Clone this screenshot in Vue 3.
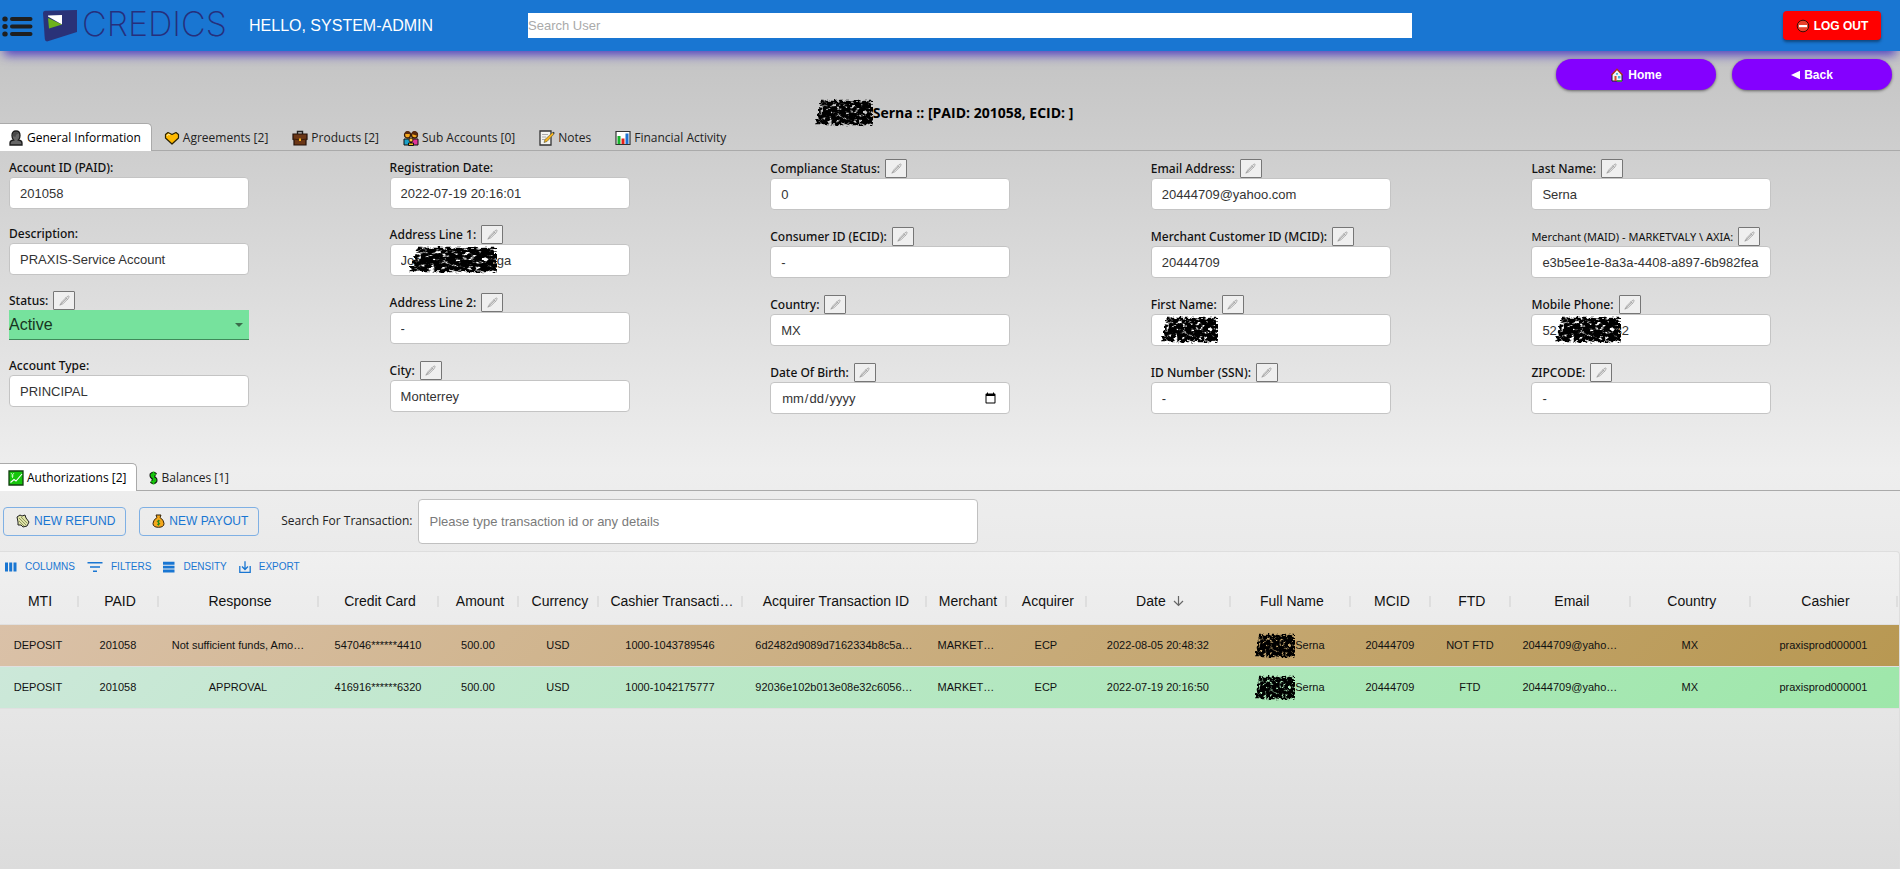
<script setup>
import { ref } from 'vue'

const accountTabs = [
  { icon: 'person', text: 'General Information' },
  { icon: 'heart', text: 'Agreements [2]' },
  { icon: 'case', text: 'Products [2]' },
  { icon: 'people', text: 'Sub Accounts [0]' },
  { icon: 'memo', text: 'Notes' },
  { icon: 'bars', text: 'Financial Activity' }
]
const accountTab = ref(0)

const moneyTabs = [
  { icon: 'trend', text: 'Authorizations [2]' },
  { icon: 'dollar', text: 'Balances [1]' }
]
const moneyTab = ref(0)

const gap = n => '\u00a0'.repeat(n)
const columns = [
  [
    { label: 'Account ID (PAID):', value: '201058' },
    { label: 'Description:', value: 'PRAXIS-Service Account' },
    { label: 'Status:', value: 'Active', edit: true, kind: 'select' },
    { label: 'Account Type:', value: 'PRINCIPAL' }
  ],
  [
    { label: 'Registration Date:', value: '2022-07-19 20:16:01' },
    { label: 'Address Line 1:', value: 'Jos' + gap(19) + 'aga', edit: true, mask: 'address' },
    { label: 'Address Line 2:', value: '-', edit: true },
    { label: 'City:', value: 'Monterrey', edit: true }
  ],
  [
    { label: 'Compliance Status:', value: '0', edit: true },
    { label: 'Consumer ID (ECID):', value: '-', edit: true },
    { label: 'Country:', value: 'MX', edit: true },
    { label: 'Date Of Birth:', value: '', edit: true, kind: 'date' }
  ],
  [
    { label: 'Email Address:', value: '20444709@yahoo.com', edit: true },
    { label: 'Merchant Customer ID (MCID):', value: '20444709', edit: true },
    { label: 'First Name:', value: '', edit: true, mask: 'first' },
    { label: 'ID Number (SSN):', value: '-', edit: true }
  ],
  [
    { label: 'Last Name:', value: 'Serna', edit: true },
    { label: 'Merchant (MAID) - MARKETVALY \\ AXIA:', value: 'e3b5ee1e-8a3a-4408-a897-6b982fea', edit: true, small: true },
    { label: 'Mobile Phone:', value: '52' + gap(16) + '32', edit: true, mask: 'phone' },
    { label: 'ZIPCODE:', value: '-', edit: true }
  ]
]

const heads = [
  ['MTI', 80], ['PAID', 80], ['Response', 160], ['Credit Card', 120], ['Amount', 80],
  ['Currency', 80], ['Cashier Transacti…', 144], ['Acquirer Transaction ID', 184],
  ['Merchant', 80], ['Acquirer', 80], ['Date', 144], ['Full Name', 120], ['MCID', 80],
  ['FTD', 80], ['Email', 120], ['Country', 120], ['Cashier', 147]
]
const rows = [
  ['DEPOSIT', '201058', 'Not sufficient funds, Amo…', '547046******4410', '500.00', 'USD', '1000-1043789546', '6d2482d9089d7162334b8c5a…', 'MARKET…', 'ECP', '2022-08-05 20:48:32', 'Serna', '20444709', 'NOT FTD', '20444709@yaho…', 'MX', 'praxisprod000001'],
  ['DEPOSIT', '201058', 'APPROVAL', '416916******6320', '500.00', 'USD', '1000-1042175777', '92036e102b013e08e32c6056…', 'MARKET…', 'ECP', '2022-07-19 20:16:50', 'Serna', '20444709', 'FTD', '20444709@yaho…', 'MX', 'praxisprod000001']
]
</script>

<template>
  <div class="page">
    <svg class="defs" aria-hidden="true">
      <defs>
        <filter id="scrawl" x="-10%" y="-10%" width="120%" height="120%">
          <feTurbulence type="fractalNoise" baseFrequency="0.22 0.3" numOctaves="3" seed="4" result="n" />
          <feDisplacementMap in="SourceGraphic" in2="n" scale="8" xChannelSelector="R" yChannelSelector="G" result="d" />
          <feColorMatrix in="n" type="matrix" values="0 0 0 0 0  0 0 0 0 0  0 0 0 0 0  4 3 0 0 -2.4" result="a" />
          <feComposite in="d" in2="a" operator="in" result="c" />
          <feGaussianBlur in="c" stdDeviation="0.4" />
        </filter>
        <symbol id="scrib" viewBox="0 0 60 30" preserveAspectRatio="none">
          <path d="M6 2 60 2 60 28 0 28Z" filter="url(#scrawl)" />
          <path d="M8 6 58 7 56 22 5 23Z" filter="url(#scrawl)" />
        </symbol>
        <symbol id="pen" viewBox="0 0 14 14">
          <path d="M2 12 4 8.500 9.500 3 11.500 2 12 3 11 5 5.500 10.500Z" fill="#e2e2e2" stroke="#999" stroke-width=".7" />
          <path d="M8 4 10.500 6M2 12 9.500 4.500" fill="none" stroke="#999" stroke-width=".7" />
        </symbol>
        <symbol id="person" viewBox="0 0 16 16">
          <path d="M2 15v-2q0-2.500 3.500-3-1.500-1.500-1.500-4.500Q4 1 8 1t4 4.500q0 3-1.500 4.500 3.500.5 3.500 3v2Z" fill="#666" stroke="#1c1c1c" stroke-width="1.300" />
          <path d="M4.500 6Q4.500 2 8 2q2 0 2.500 1.500-3 .5-3 3.500Z" fill="#484848" />
        </symbol>
        <symbol id="heart" viewBox="0 0 16 16">
          <path d="M8 14 1.500 8V4.500L4 2.500l4 2 4-2 2.500 2V8Z" fill="#ffb900" stroke="#2b2200" stroke-width="1.200" stroke-linejoin="round" />
          <path d="M3 6Q4 3.500 6 5" fill="none" stroke="#ffe68c" stroke-width="1.300" />
        </symbol>
        <symbol id="case" viewBox="0 0 16 16">
          <path d="M5.500 4V1.500h5V4" fill="none" stroke="#222" stroke-width="1.400" />
          <path d="M1 4h14v5.500l-1 .5v5H2v-5l-1-.5Z" fill="#6b3717" stroke="#24120a" stroke-width="1.200" />
          <path d="M1.500 9 8 10l6.500-1" fill="none" stroke="#3b1c0b" />
          <path d="M7 8.500h2v2.500H7Z" fill="#f6b21b" />
        </symbol>
        <symbol id="people" viewBox="0 0 16 16">
          <path d="M1 15V9h6.500v6Z" fill="#1ba1c8" stroke="#111" />
          <path d="M8.500 15V9H15v6Z" fill="#e2339a" stroke="#111" />
          <circle cx="4.500" cy="5" r="3" fill="#f6a81c" stroke="#3a1d0a" stroke-width="1.300" />
          <circle cx="11.500" cy="5" r="3" fill="#f6a81c" stroke="#3a1d0a" stroke-width="1.300" />
          <path d="M1.500 4Q2 1 4.500 1t3 3ZM8.500 4Q9 1 11.500 1t3.500 5Z" fill="#5a2a0e" />
          <circle cx="8" cy="10" r="2" fill="#ffc83d" stroke="#3a1d0a" />
          <path d="M5.500 15.500V13h5v2.500Z" fill="#f7b91a" stroke="#111" />
        </symbol>
        <symbol id="memo" viewBox="0 0 16 16">
          <path d="M1 1h11v14H1Z" fill="#f4f4f0" stroke="#333" stroke-width="1.300" />
          <path d="M3 4.500h6M3 7h4M3 9.500h3" stroke="#aaa" />
          <path d="M5 12.500 6 9.500 13.500 2.500 15 4 8 11.500Z" fill="#f8b21a" stroke="#664" stroke-width=".7" />
          <path d="M13.500 2.500 15 4l.7-1-1-1.200Z" fill="#333" />
        </symbol>
        <symbol id="bars" viewBox="0 0 16 16">
          <path d="M1 1.500h14v13H1Z" fill="#fff" stroke="#333" stroke-width="1.200" />
          <path d="M2.500 6h3v8h-3Z" fill="#17b32b" />
          <path d="M6.500 8.500h3V14h-3Z" fill="#e3221c" />
          <path d="M10.500 3.500h3V14h-3Z" fill="#1e72d2" />
        </symbol>
        <symbol id="trend" viewBox="0 0 16 16">
          <path d="M1 1h14v14H1Z" fill="#16c60c" stroke="#123d10" stroke-width="1.300" />
          <path d="M2.500 12.500 6 9.500 8 11 14 4" fill="none" stroke="#fff" stroke-width="1.100" />
          <path d="M3 3 4.500 5 6 3M4.500 5v3M3.300 6h2.400" fill="none" stroke="#d8ffd4" stroke-width=".8" />
        </symbol>
        <symbol id="dollar" viewBox="0 0 9 16">
          <path d="M7 4.800Q4 3 2.500 4.500 2 6.800 4.500 7.800T6.500 11Q5 13 2 11.200M4.500 2v12" fill="none" stroke="#111" stroke-width="3.800" />
          <path d="M7 4.800Q4 3 2.500 4.500 2 6.800 4.500 7.800T6.500 11Q5 13 2 11.200M4.500 1.500v13" fill="none" stroke="#16c60c" stroke-width="1.800" />
        </symbol>
      </defs>
    </svg>

    <header class="bar">
      <button class="menu" aria-label="Menu">
        <svg width="32" height="22" viewBox="0 0 32 22" stroke="#1f1f1f" stroke-width="4" stroke-linecap="round">
          <path d="M10 4H28.500M10 11.500H28.500M10 19H28.500" />
          <path d="M2.800 4h.4M2.800 11.500h.4M2.800 19h.4" stroke-width="5" />
        </svg>
      </button>
      <svg class="mark" width="34" height="32" viewBox="0 0 34 32">
        <path d="M2 .8 34 0V22L4 31.500Q2 31 1.800 29L0 3Q0 1 2 .8Z" fill="#2a3278" />
        <path d="M5 5.500 19 5V14.500L5 6.500Z" fill="#fff" />
        <path d="M5 8 19 14.500 6 18.500Z" fill="#6db31b" />
      </svg>
      <span class="brand">CREDICS</span>
      <span class="hello">HELLO, SYSTEM-ADMIN</span>
      <input class="user-search" type="text" placeholder="Search User" aria-label="Search User">
      <button class="logout">
        <svg width="14" height="14" viewBox="0 0 14 14">
          <circle cx="7" cy="7" r="5.800" fill="#e8412a" stroke="#3b0d06" />
          <path d="M3 6h8v2.200H3Z" fill="#fff" />
        </svg>
        LOG OUT
      </button>
    </header>

    <nav class="quick">
      <button class="pill">
        <svg width="14" height="14" viewBox="0 0 14 14">
          <path d="M2 13V6.500L7 1l5 5.500V13Z" fill="#eef4f6" stroke="#222" />
          <path d="M1.500 7 7 1.200 12.500 7" fill="none" stroke="#b3311f" stroke-width="1.300" />
          <path d="M4.500 8h2v5h-2Z" fill="#d8482c" />
          <path d="M8 8h2.500v2.500H8ZM6 5h2v1.800H6Z" fill="#4ab7dc" />
          <path d="M7 13h5" stroke="#37a33a" stroke-width="1.500" />
        </svg>
        Home
      </button>
      <button class="pill">
        <svg width="9" height="10" viewBox="0 0 9 10"><path d="M0 5 9 .8V9.200Z" fill="#fff" /></svg>
        Back
      </button>
    </nav>

    <h1 class="title">
      <svg class="scrib title-scrib" aria-hidden="true"><use href="#scrib" /></svg>Serna :: [PAID: 201058, ECID: ]
    </h1>

    <div class="tabs" role="tablist">
      <button v-for="(t, i) in accountTabs" :key="t.text" role="tab" :aria-selected="i === accountTab" class="tab" :class="{ on: i === accountTab }" @click="accountTab = i">
        <svg class="emoji"><use :href="'#' + t.icon" /></svg>{{ t.text }}
      </button>
    </div>

    <section class="fields">
      <div v-for="(col, c) in columns" :key="c" class="col">
        <div v-for="(f, r) in col" :key="f.label" class="field" :class="{ editable: f.edit }">
          <div class="head">
            <label :for="'f' + c + r" :class="{ small: f.small }">{{ f.label }}</label>
            <button v-if="f.edit" class="edit" :aria-label="'Edit ' + f.label">
              <svg width="13" height="13"><use href="#pen" /></svg>
            </button>
          </div>
          <div class="box">
            <template v-if="f.kind === 'select'">
              <select :id="'f' + c + r" class="status"><option>{{ f.value }}</option></select>
              <svg class="caret" width="8" height="4" viewBox="0 0 8 4"><path d="M0 0h8L4 4Z" fill="#3b6b4b" /></svg>
            </template>
            <input v-else :id="'f' + c + r" class="text" :type="f.kind || 'text'" :value="f.value">
            <svg v-if="f.mask" class="scrib" :class="f.mask" aria-hidden="true"><use href="#scrib" /></svg>
          </div>
        </div>
      </div>
    </section>

    <div class="tabs" role="tablist">
      <button v-for="(t, i) in moneyTabs" :key="t.text" role="tab" :aria-selected="i === moneyTab" class="tab" :class="{ on: i === moneyTab }" @click="moneyTab = i">
        <svg class="emoji" :class="t.icon"><use :href="'#' + t.icon" /></svg>{{ t.text }}
      </button>
    </div>

    <section class="actions">
      <button class="outline">
        <svg width="14" height="14" viewBox="0 0 14 14">
          <path d="M1 3 4 1l2 1 3-1 1 3 3 4-2 4-4 1-2-2-3 0 0-3Z" fill="#dfe3a6" stroke="#222" />
          <path d="M3 4 10 11M5 3l6 6M3 7l5 5" stroke="#77804e" stroke-width=".8" />
        </svg>
        NEW REFUND
      </button>
      <button class="outline">
        <svg width="13" height="14" viewBox="0 0 13 14">
          <path d="M4 1h5L8 3.500Q12 6 12 9.500 12 13.300 6.500 13.300T1 9.500Q1 6 5 3.500Z" fill="#f5a81c" stroke="#33230a" />
          <path d="M8.200 7Q6.500 6 5.200 7.200q0 1 1.300 1.300T7.800 10Q6.500 11.200 5 10.200M6.500 5.800v5.800" fill="none" stroke="#178a1c" stroke-width=".9" />
        </svg>
        NEW PAYOUT
      </button>
      <label class="find" for="txn">Search For Transaction:</label>
      <input id="txn" class="txn" type="text" placeholder="Please type transaction id or any details">
    </section>

    <section class="grid">
      <div class="tools">
        <button>
          <svg width="12" height="12" viewBox="0 0 12 12" fill="#1976d2"><path d="M0 1.500h3v9H0zM4.200 1.500h3v9h-3zM8.500 1.500h3v9h-3z" /></svg>
          COLUMNS
        </button>
        <button>
          <svg width="16" height="12" viewBox="0 0 16 12" fill="#1976d2"><path d="M.5 1h15v1.600H.5zM3 5.200h10v1.600H3zM6 9.400h4V11H6z" /></svg>
          FILTERS
        </button>
        <button>
          <svg width="12" height="12" viewBox="0 0 12 12" fill="#1976d2"><path d="M0 .8h11.500v3H0zM0 4.800h11.500v2.800H0zM0 8.600h11.500v2.800H0z" /></svg>
          DENSITY
        </button>
        <button>
          <svg width="12" height="12" viewBox="0 0 12 12" fill="none" stroke="#1976d2" stroke-width="1.300"><path d="M.8 5v6.300h10.400V5M6 .3v8M3 5.500 6 8.500 9 5.500" /></svg>
          EXPORT
        </button>
      </div>
      <table>
        <colgroup><col v-for="h in heads" :key="h[0]" :style="{ width: h[1] / 18.99 + '%' }"></colgroup>
        <thead>
          <tr>
            <th v-for="h in heads" :key="h[0]" scope="col">
              {{ h[0] }}<svg v-if="h[0] === 'Date'" class="arrow" width="11" height="12" viewBox="0 0 11 12" fill="none" stroke="#666" stroke-width="1.200"><path d="M5.500 1v9.500M1 6l4.500 4.500L10 6" /></svg>
            </th>
          </tr>
        </thead>
        <tbody>
          <tr v-for="(row, i) in rows" :key="i" :class="i ? 'ok' : 'fail'">
            <td v-for="(cell, j) in row" :key="j">
              <svg v-if="j === 11" class="scrib cell-scrib" aria-hidden="true"><use href="#scrib" /></svg>{{ cell }}
            </td>
          </tr>
        </tbody>
      </table>
    </section>
  </div>
</template>

<style>
body {
  margin: 0;
}
</style>

<style scoped>
.page {
  min-height: 100vh;
  box-sizing: border-box;
  display: flex;
  flex-direction: column;
  background: linear-gradient(#bfbfbf, #eee 54%, #eaeaea 64%, #ddd);
  color: #111;
  font-family: "Liberation Sans", Arial, sans-serif;
  overflow-x: clip;
}
.page * {
  box-sizing: border-box;
}
.defs {
  position: absolute;
  width: 0;
  height: 0;
}
button {
  font-family: inherit;
  cursor: pointer;
}
button svg {
  flex: none;
}
.bar {
  height: 51px;
  display: flex;
  align-items: center;
  background: #1976d2;
  box-shadow: 0 8px 10px -4px rgba(60, 40, 190, 0.85);
}
.menu {
  border: 0;
  padding: 0 0 0 2px;
  background: none;
  display: flex;
  width: 43px;
}
.mark {
  flex: none;
}
.brand {
  width: 172px;
  padding-left: 5px;
  margin-top: -4px;
  font: 200 34px/40px Inter, sans-serif;
  color: #262f7c;
}
.hello {
  width: 279px;
  font-size: 16px;
  line-height: 20px;
  color: #fff;
}
.user-search {
  width: 46.500%;
  height: 25px;
  border: 0;
  padding: 0;
  background: #fff;
  font: 13px "Liberation Sans", sans-serif;
}
.user-search::placeholder {
  color: #aaa;
}
.logout {
  margin-left: auto;
  margin-right: 19px;
  width: 98px;
  height: 29px;
  display: flex;
  align-items: center;
  justify-content: center;
  gap: 4px;
  border: 0;
  border-radius: 4px;
  padding: 0;
  background: #f00;
  color: #fff;
  font-size: 12px;
  font-weight: 700;
  white-space: nowrap;
  box-shadow: 0 2px 3px rgba(0, 0, 0, 0.4);
}
.quick {
  display: flex;
  justify-content: flex-end;
  gap: 16px;
  padding: 8px 8px 0;
}
.pill {
  width: 160px;
  height: 31px;
  display: flex;
  align-items: center;
  justify-content: center;
  gap: 4px;
  border: 0;
  border-radius: 16px;
  background: #8400ff;
  color: #fff;
  font-size: 12px;
  font-weight: 700;
  box-shadow: 0 1px 3px rgba(0, 0, 0, 0.5);
}
.title {
  display: flex;
  justify-content: center;
  align-items: center;
  height: 20px;
  margin: 13px 0 0;
  padding-right: 12px;
  font: 700 14px/20px "Open Sans", sans-serif;
  color: #000;
}
.scrib {
  overflow: visible;
  pointer-events: none;
}
.title-scrib {
  width: 58px;
  height: 28px;
  position: relative;
  z-index: 1;
}
.tabs {
  display: flex;
  height: 28px;
  border-bottom: 1px solid #aaa;
}
.tab {
  height: 28px;
  display: flex;
  align-items: center;
  gap: 3px;
  border: 1px solid transparent;
  border-bottom: 0;
  border-radius: 5px 5px 0 0;
  padding: 0 11px;
  background: none;
  color: #222;
  font: 12px/18px "Open Sans", sans-serif;
  white-space: nowrap;
}
.tab:first-child {
  border-left: 0;
  border-top-left-radius: 0;
  padding: 0 10px 0 8px;
}
.tab.on {
  background: #fff;
  border-color: #aaa;
  color: #000;
}
.emoji {
  width: 16px;
  height: 16px;
}
.emoji.dollar {
  width: 9px;
}
.fields {
  display: grid;
  grid-template-columns: repeat(5, 1fr);
  margin-right: -3px;
  padding: 8px 0 32px;
}
.col {
  padding-left: 9px;
}
.field {
  margin-bottom: 16px;
}
.field.editable {
  margin-bottom: 17px;
}
.head {
  height: 18px;
  display: flex;
  align-items: center;
  gap: 5px;
  font: 500 12px/18px "Noto Sans", sans-serif;
  white-space: nowrap;
}
.editable .head {
  height: 19px;
}
.small {
  font-size: 11px;
  font-weight: 400;
}
.edit {
  width: 22px;
  height: 19px;
  display: flex;
  align-items: center;
  justify-content: center;
  padding: 0;
  border: 1px solid #767676;
  border-radius: 1px;
  background: #efefef;
}
.box {
  position: relative;
  width: 240px;
}
.text {
  display: block;
  width: 100%;
  height: 32px;
  border: 1px solid #c4c4c4;
  border-radius: 4px;
  padding: 0 10px;
  background: #fff;
  color: #333;
  font: 13px "Liberation Sans", sans-serif;
}
.status {
  display: block;
  width: 100%;
  height: 30px;
  appearance: none;
  border: 0;
  border-bottom: 1px solid #3f8a5a;
  border-radius: 0;
  padding: 0;
  background: #76e29d;
  color: #17351f;
  font: 16px "Liberation Sans", sans-serif;
}
.caret {
  position: absolute;
  right: 6px;
  top: 13px;
  pointer-events: none;
}
.box .scrib {
  position: absolute;
  top: 2px;
  height: 28px;
}
.box .address {
  left: 19px;
  width: 88px;
}
.box .first {
  left: 10px;
  width: 57px;
}
.box .phone {
  left: 24px;
  width: 66px;
}
.actions {
  display: flex;
  align-items: center;
  padding: 0 0 0 3px;
  height: 60px;
}
.outline {
  height: 29px;
  display: flex;
  align-items: center;
  gap: 4px;
  margin-right: 13px;
  border: 1px solid #7fb0e4;
  border-radius: 4px;
  padding: 0 10px 0 12px;
  background: none;
  color: #1976d2;
  font-size: 12px;
  white-space: nowrap;
}
.find {
  margin: 0 6px 0 9px;
  font: 12px/18px "Open Sans", sans-serif;
  color: #222;
}
.txn {
  width: 560px;
  height: 45px;
  border: 1px solid #c0c0c0;
  border-radius: 4px;
  padding: 0 10px;
  background: #fff;
  font: 13px "Liberation Sans", sans-serif;
}
.txn::placeholder {
  color: #7a7a7a;
}
.grid {
  flex: 1;
  border: 1px solid #dedede;
  border-left: 0;
  border-bottom: 0;
  border-radius: 0 4px 0 0;
  background: linear-gradient(#f0f0f0, #dcdcdc);
}
.tools {
  display: flex;
  gap: 12px;
  padding: 7px 0 0 5px;
}
.tools button {
  display: flex;
  align-items: center;
  gap: 8px;
  border: 0;
  padding: 0;
  background: none;
  color: #1976d2;
  font-size: 10px;
  line-height: 16px;
}
table {
  width: 100%;
  table-layout: fixed;
  border-collapse: collapse;
}
th {
  position: relative;
  height: 49px;
  padding: 4px 0 0;
  font-size: 14px;
  font-weight: 400;
  white-space: nowrap;
}
th::after {
  content: "";
  position: absolute;
  right: 1px;
  top: 21px;
  width: 2px;
  height: 11px;
  background: #dedede;
}
.arrow {
  margin-left: 7px;
  vertical-align: -1px;
}
td {
  height: 42px;
  padding: 0 4px 0 0;
  border-top: 1px solid #e0e0e0;
  border-bottom: 1px solid #e0e0e0;
  font-size: 11px;
  text-align: center;
  white-space: nowrap;
}
.fail {
  background: linear-gradient(135deg, #dac1a8, #b89852);
}
.ok {
  background: linear-gradient(135deg, #cce8d9, #9ee7aa);
}
.cell-scrib {
  width: 40px;
  height: 26px;
  margin: -9px 0;
  vertical-align: middle;
}
</style>
